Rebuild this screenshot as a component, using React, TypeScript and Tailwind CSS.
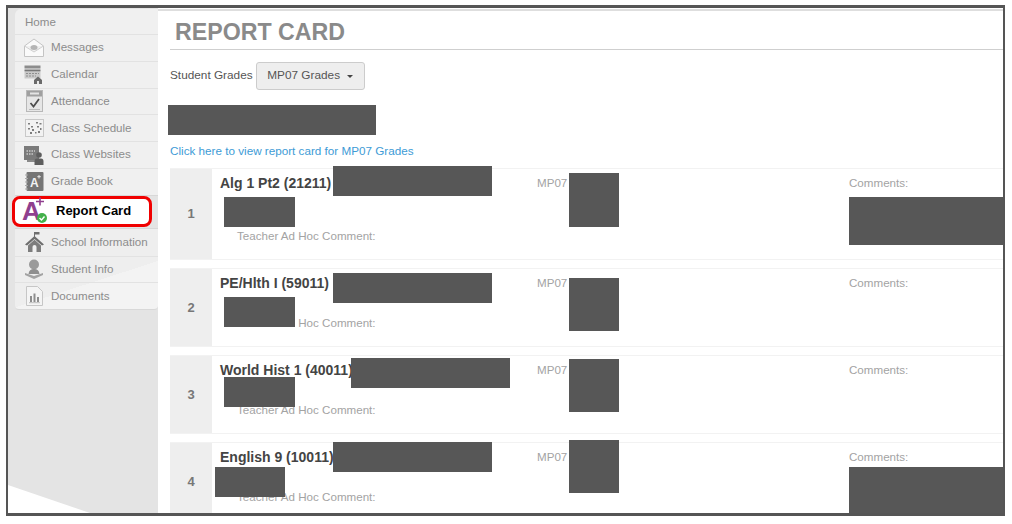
import React from 'react';

const Messages = () => (
  <svg width="22" height="20" viewBox="0 0 22 20">
    <path d="M1.5 8 L11 1 L20.5 8 V18.5 H1.5 Z" fill="#fafafa" stroke="#c4c4c4" strokeWidth="1" />
    <path d="M1.5 8 L11 14 L20.5 8" fill="#f0f0f0" stroke="#d0d0d0" strokeWidth="1" />
    <ellipse cx="11" cy="9.5" rx="3.5" ry="2.5" fill="#b5b5b5" />
  </svg>
);

const Calendar = () => (
  <svg width="20" height="19" viewBox="0 0 20 19">
    <rect x="0.5" y="0.5" width="16" height="3" fill="#8c8c8c" />
    <rect x="0.5" y="4.5" width="16" height="2" fill="#777" />
    <rect x="0.5" y="7" width="16" height="6.5" fill="#c9c9c9" />
    <path d="M2 8.5 H15 M2 11 H12" stroke="#8f8f8f" strokeWidth="1.2" strokeDasharray="2 1" />
    <path d="M10 15 L14 11.5 L18 15 V19 H10 Z" fill="#6a6a6a" />
    <rect x="13" y="16" width="2" height="3" fill="#e8e8e8" />
  </svg>
);

const Attendance = () => (
  <svg width="17" height="22" viewBox="0 0 17 22">
    <rect x="0.5" y="0.5" width="16" height="21" fill="#e6e6e6" stroke="#b8b8b8" />
    <rect x="1" y="1" width="15" height="5.5" fill="#a0a0a0" />
    <rect x="4" y="2.5" width="9" height="2" fill="#e4e4e4" />
    <path d="M4.5 13 L7.5 16.5 L13 9" fill="none" stroke="#4d4d4d" strokeWidth="1.8" />
    <path d="M3 19.5 H14" stroke="#bbb" strokeWidth="1" />
  </svg>
);

const Schedule = () => (
  <svg width="19" height="18" viewBox="0 0 19 18">
    <rect x="0.5" y="0.5" width="18" height="17" fill="#f2f2f2" stroke="#c8c8c8" />
    <path d="M3 4h2v1.5H3z M6 7h2v1.5H6z M11 3h2v1.5h-2z M14.5 4h2v1.5h-2z M12 7h2v1.5h-2z M15 9h1.5v2H15z M3 9h2v1.5H3z M7 10h2v2H7z M5 13h2v2H5z M13 12h2v2h-2z M10 13h1.5v1.5H10z" fill="#7d7d7d" />
  </svg>
);

const Websites = () => (
  <svg width="20" height="19" viewBox="0 0 20 19">
    <rect x="0" y="0" width="15" height="14" fill="#7a7a7a" />
    <rect x="3" y="14" width="9" height="2" fill="#8a8a8a" />
    <path d="M2.5 5 H11 M2.5 8 H9" stroke="#c9c9c9" strokeWidth="1.4" strokeDasharray="1.5 1" />
    <circle cx="15" cy="9" r="2.8" fill="#5e5e5e" />
    <path d="M10.5 19 V15.5 Q10.5 12.5 13 12.5 H17 Q19.5 12.5 19.5 15.5 V19 Z" fill="#5e5e5e" />
  </svg>
);

const GradeBook = () => (
  <svg width="19" height="19" viewBox="0 0 19 19">
    <rect x="1.5" y="0" width="17" height="19" rx="1" fill="#757575" />
    <path d="M0 3h3M0 6.5h3M0 10h3M0 13.500h3M0 17h3" stroke="#a8a8a8" strokeWidth="1" />
    <text x="5" y="14.500" fontSize="12" fontWeight="700" fontFamily="'Liberation Sans', sans-serif" fill="#f3f3f3">A</text>
    <path d="M14 3v3.500M12.300 4.700h3.500" stroke="#e8e8e8" strokeWidth="1" />
  </svg>
);

const ReportCard = () => (
  <svg width="28" height="28" viewBox="0 0 28 28">
    <text x="1" y="22.500" fontSize="26" fontWeight="700" fontFamily="'Liberation Sans', sans-serif" fill="#8f3f8f">A</text>
    <path d="M19 0.500v8M15 4.500h8" stroke="#8f3f8f" strokeWidth="1.600" />
    <circle cx="21" cy="21" r="5" fill="#43b04a" />
    <path d="M18.500 21l2 2 3-3.500" fill="none" stroke="#fff" strokeWidth="1.400" />
  </svg>
);

const School = () => (
  <svg width="19" height="20" viewBox="0 0 19 20">
    <path d="M9.500 0v5" stroke="#6e6e6e" strokeWidth="1" />
    <path d="M9.500 0h5v2.500h-5z" fill="#6e6e6e" />
    <path d="M0 12.500 L9.500 4 L19 12.500 L17 13.500 L9.500 7 L2 13.500 Z" fill="#6e6e6e" />
    <path d="M3 13.500 L9.500 7.800 L16 13.500 V20 H3 Z" fill="#7d7d7d" />
    <path d="M7.500 20v-5q0-2 2-2t2 2v5z" fill="#f0f0f0" />
  </svg>
);

const Student = () => (
  <svg width="20" height="20" viewBox="0 0 20 20">
    <circle cx="10" cy="5.500" r="5" fill="#9a9a9a" />
    <path d="M4.500 15 Q5 10 10 10 Q15 10 15.500 15 Z" fill="#8f8f8f" />
    <path d="M1 14 L10 17 L19 14 V16 L10 20 L1 16 Z" fill="#a3a3a3" />
  </svg>
);

const Documents = () => (
  <svg width="17" height="20" viewBox="0 0 17 20">
    <path d="M0.500 0.500 H11.500 L16.500 5.500 V19.500 H0.500 Z" fill="#f4f4f4" stroke="#c6c6c6" />
    <path d="M4 10h2v6H4z M7.500 7.500h2V16h-2z M11 11h2v5h-2z" fill="#8d8d8d" />
    <path d="M3 16.700 H14" stroke="#b0b0b0" strokeWidth="0.800" />
  </svg>
);

const MenuRow = ({ icon, label, first }: { icon: React.ReactNode; label: string; first?: boolean }) => (
  <div className={`flex h-[26.8px] items-center border-[#e2e2e2] ${first ? '' : 'border-t'}`}>
    <div className="flex w-[36px] shrink-0 justify-center pl-[2px]">{icon}</div>
    <span className={`text-[11.6px] text-[#8c8c8c] ${first ? '' : 'pb-[2px]'}`}>{label}</span>
  </div>
);

const Redact = ({ className }: { className: string }) => (
  <div className={`absolute bg-[#575757] ${className}`} />
);

const rows = [
  {
    num: 1,
    title: 'Alg 1 Pt2 (21211)',
    height: 'h-[92px]',
    gap: 'mt-[38px]',
    redacts: [
      'left-[163px] top-[-3px] h-[30px] w-[159px]',
      'left-[54px] top-[28px] h-[30px] w-[71px]',
      'left-[399px] top-[4px] h-[54px] w-[50px]',
      'left-[679px] top-[28px] h-[48px] w-[154px]',
    ],
  },
  {
    num: 2,
    title: 'PE/Hlth I (59011)',
    height: 'h-[79px]',
    gap: 'mt-[25px]',
    redacts: [
      'left-[163px] top-[4px] h-[30px] w-[159px]',
      'left-[54px] top-[28px] h-[30px] w-[71px]',
      'left-[399px] top-[9px] h-[53px] w-[50px]',
    ],
  },
  {
    num: 3,
    title: 'World Hist 1 (40011)',
    height: 'h-[79px]',
    gap: 'mt-[25px]',
    redacts: [
      'left-[181px] top-[2px] h-[30px] w-[159px]',
      'left-[54px] top-[21px] h-[30px] w-[71px]',
      'left-[399px] top-[3px] h-[53px] w-[50px]',
    ],
  },
  {
    num: 4,
    title: 'English 9 (10011)',
    height: 'h-[79px]',
    gap: 'mt-[25px]',
    redacts: [
      'left-[163px] top-[-1px] h-[30px] w-[159px]',
      'left-[45px] top-[24px] h-[30px] w-[70px]',
      'left-[399px] top-[-3px] h-[53px] w-[50px]',
      'left-[679px] top-[24px] h-[50px] w-[154px]',
    ],
  },
];

export default function App() {
  return (
    <div className="h-[524px] w-[1012px] overflow-hidden bg-white pl-[6px] pt-[5px] font-['Liberation_Sans',Arial,sans-serif]">
      <div className="flex h-[511px] w-[999px] overflow-hidden border-x-2 border-b-[3px] border-t-[3px] border-[#555]">
        {/* left nav */}
        <div className="relative w-[150px] shrink-0 bg-[#e4e4e4] pl-[7px] pt-px">
          <div className="absolute bottom-0 left-0 h-[28px] w-[82px] bg-white [clip-path:polygon(0_0,100%_100%,0_100%)]" />
          <div className="rounded-tl-md border-b border-[#d8d8d8] bg-[#f0f0f0]">
            <div className="flex h-[25px] items-center pl-[10px] text-[11.6px] text-[#8c8c8c]">Home</div>
            <MenuRow icon={<Messages />} label="Messages" />
            <MenuRow icon={<Calendar />} label="Calendar" />
            <MenuRow icon={<Attendance />} label="Attendance" />
            <MenuRow icon={<Schedule />} label="Class Schedule" />
            <MenuRow icon={<Websites />} label="Class Websites" />
            <MenuRow icon={<GradeBook />} label="Grade Book" />
          </div>
          <div className="relative z-10 ml-[-3px] flex h-[31px] w-[140px] items-center rounded-lg border-[3px] border-[#f00000] bg-white pl-[6px]">
            <ReportCard />
            <span className="ml-[7px] pb-[2px] text-[13px] font-bold text-black">Report Card</span>
          </div>
          <div className="mt-px rounded-b-sm border-y border-[#d8d8d8] bg-[linear-gradient(162deg,#eeeeee_62%,#f3f3f3_62%)]">
            <MenuRow first icon={<School />} label="School Information" />
            <MenuRow icon={<Student />} label="Student Info" />
            <MenuRow icon={<Documents />} label="Documents" />
          </div>
        </div>

        {/* report card */}
        <div className="min-w-0 flex-1 bg-white pl-[12px] pt-px">
          <div className="-ml-[12px] border-t-2 border-[#dedede]" />
          <div className="flex h-[39px] items-center border-b border-[#cfcfcf] pl-[5px] pt-[4px]">
            <h1 className="text-[23.2px] font-bold text-[#8a8a8a]">REPORT CARD</h1>
          </div>
          <div className="mt-[12px] flex items-center">
            <span className="text-[11.8px] text-[#555]">Student Grades</span>
            <div className="ml-[3px] flex h-[28px] w-[109px] items-center justify-center gap-[7px] rounded-[3px] border border-[#cccccc] bg-[#eeeeee] text-[11.8px] text-[#555]">
              MP07 Grades
              <span className="h-0 w-0 border-x-[3.500px] border-t-[3.500px] border-x-transparent border-t-[#444]" />
            </div>
          </div>
          <div className="ml-[-2px] mt-[15px] h-[30px] w-[208px] bg-[#575757]" />
          <a className="mt-[8px] block text-[11.7px] leading-[16px] text-[#3d9bd6]">
            Click here to view report card for MP07 Grades
          </a>
          <div className="mt-[9px] flex flex-col gap-[8px]">
            {rows.map((r) => (
              <div key={r.num} className={`relative flex shrink-0 border-y border-[#f2f2f2] ${r.height}`}>
                <div className="flex w-[42px] shrink-0 items-center justify-center bg-[#eeeeee] text-[13px] font-bold text-[#777]">
                  {r.num}
                </div>
                <div className="w-[325px] shrink-0 pl-[8px] pt-[6px]">
                  <div className="whitespace-nowrap text-[14px] font-bold leading-[16px] text-[#444]">{r.title}</div>
                  <div className={`pl-[17px] text-[11.6px] leading-[14px] text-[#a3a3a3] ${r.gap}`}>
                    Teacher Ad Hoc Comment:
                  </div>
                </div>
                <div className="w-[312px] shrink-0 pt-[7px] text-[11.6px] leading-[14px] text-[#a3a3a3]">MP07</div>
                <div className="pt-[7px] text-[11.6px] leading-[14px] text-[#a3a3a3]">Comments:</div>
                {r.redacts.map((c) => (
                  <Redact key={c} className={c} />
                ))}
              </div>
            ))}
          </div>
        </div>
      </div>
    </div>
  );
}
